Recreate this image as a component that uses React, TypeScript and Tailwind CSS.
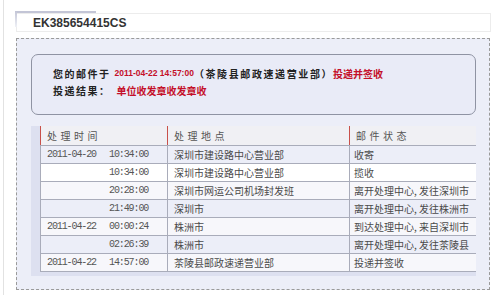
import React from "react";

const rows = [
  { d: "2011-04-20", t: "10:34:00", p: "深圳市建设路中心营业部", s: "收寄", bg: "bg-[#eceef8]" },
  { d: "", t: "10:34:00", p: "深圳市建设路中心营业部", s: "揽收", bg: "bg-white" },
  { d: "", t: "20:28:00", p: "深圳市网运公司机场封发班", s: "离开处理中心, 发往深圳市", bg: "bg-[#f7f7fb]" },
  { d: "", t: "21:49:00", p: "深圳市", s: "离开处理中心, 发往株洲市", bg: "bg-[#eceef8]" },
  { d: "2011-04-22", t: "00:00:24", p: "株洲市", s: "到达处理中心, 来自深圳市", bg: "bg-[#f7f7fb]" },
  { d: "", t: "02:26:39", p: "株洲市", s: "离开处理中心, 发往茶陵县", bg: "bg-[#eceef8]" },
  { d: "2011-04-22", t: "14:57:00", p: "茶陵县邮政速递营业部", s: "投递并签收", bg: "bg-[#f7f7fb]" },
];

const cjk = "font-['Noto_Sans_CJK_SC',sans-serif]";
const mono = "font-['Liberation_Mono',monospace]";

export default function App() {
  return (
    <div className="w-[500px] h-[295px] bg-white pl-[3px] overflow-hidden">
      <div className="h-full border-l border-[#e2e2e2] pt-[11px] pl-[11px]">
        {/* title */}
        <div className="relative w-[477px]">
          <div className="absolute left-0 top-0 w-[81px] h-[2px] bg-[#c3c5d6]" />
          <div className="absolute left-0 top-0 w-[2px] h-[16px] bg-gradient-to-b from-[#c3c5d6] to-[#eef0f6]" />
          <div className="ml-[1px] pt-[2px]">
            <div className="h-[19px] w-[475px] border border-[#ececec] bg-white pl-[16px] flex items-center">
              <span className="font-['Liberation_Sans',sans-serif] font-bold text-[12px] text-[#333] leading-none">
                EK385654415CS
              </span>
            </div>
          </div>
        </div>

        {/* panel */}
        <div className="ml-[1px] mt-[6px] w-[474px] h-[252px] border border-dashed border-[#9a9a9a] bg-[#eceef8] pl-[14px] pt-[15px]">
          <div className="w-[445px] h-[61px] border border-[#8f93a3] rounded-[7px] bg-[#e9ebf7] pl-[21px] pt-[10px]">
            <div className={`${cjk} text-[10px] leading-[17px] font-bold text-[#222] flex items-center whitespace-nowrap`}>
              <span className="tracking-[1.5px]">您的邮件于</span>
              <span className="ml-[4px] font-['Liberation_Sans',sans-serif] text-[8.5px] text-[#c4102a] font-bold">
                2011-04-22 14:57:00
              </span>
              <span className="tracking-[1.6px]">（茶陵县邮政速递营业部）</span>
              <span className="text-[#c4102a]">投递并签收</span>
            </div>
            <div className={`${cjk} text-[10px] leading-[17px] font-bold text-[#222] flex items-center whitespace-nowrap`}>
              <span className="tracking-[1.5px]">投递结果：</span>
              <span className="ml-[6px] text-[#c4102a]">单位收发章收发章收</span>
            </div>
          </div>

          <div className="mt-[11px] w-[445px] bg-[#dde0f0] pl-[9px] pb-[4px]">
            <div className={`${cjk} text-[10px] text-[#4a4a4a]`}>
              <div className="grid grid-cols-[127px_182px_127px] h-[20px] bg-[#f0f0f4] border-b border-[#a9acba] text-[#555]">
                <div className="border-l border-[#c8504a] pl-[6px] flex items-center tracking-[3.5px]">处理时间</div>
                <div className="border-l border-[#c8504a] pl-[6px] flex items-center tracking-[3.5px]">处理地点</div>
                <div className="border-l border-[#c8504a] pl-[6px] flex items-center tracking-[3.5px]">邮件状态</div>
              </div>
              {rows.map((r, i) => (
                <div
                  key={i}
                  className={`grid grid-cols-[127px_182px_127px] h-[18px] border-b border-[#a9acba] ${r.bg}`}
                >
                  <div className={`border-l border-[#a9acba] pl-[6px] flex items-center ${mono} text-[10px] tracking-[-1.1px] text-[#555]`}>
                    <span className="w-[62px]">{r.d}</span>
                    <span>{r.t}</span>
                  </div>
                  <div className="border-l border-[#a9acba] pl-[6px] flex items-center whitespace-nowrap">{r.p}</div>
                  <div className="border-l border-[#a9acba] pl-[4px] flex items-center whitespace-nowrap">{r.s}</div>
                </div>
              ))}
            </div>
          </div>
        </div>
      </div>
    </div>
  );
}
